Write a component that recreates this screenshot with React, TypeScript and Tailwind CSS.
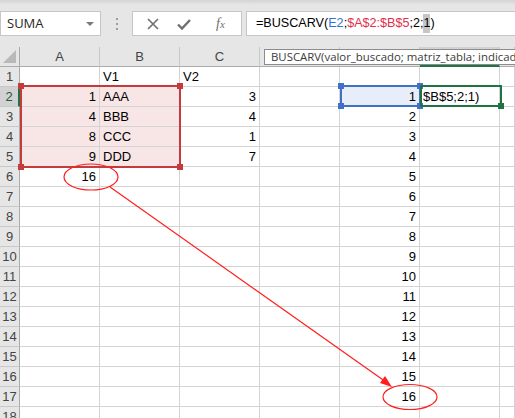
import React from "react"

const COLS = ["A", "B", "C", "D", "E", "F", "G"]
const WIDTHS = ["w-[80px]", "w-[80px]", "w-[80px]", "w-[80px]", "w-[80px]", "w-[80px]", "w-[15px]"]
// D to G header labels sit under the function tooltip
const HIDDEN_HEADERS = ["D", "E", "F", "G"]

type Cell = { v: string; right?: boolean }

const DATA: Record<string, Cell> = {
  B1: { v: "V1" },
  C1: { v: "V2" },
  A2: { v: "1", right: true },
  A3: { v: "4", right: true },
  A4: { v: "8", right: true },
  A5: { v: "9", right: true },
  B2: { v: "AAA" },
  B3: { v: "BBB" },
  B4: { v: "CCC" },
  B5: { v: "DDD" },
  C2: { v: "3", right: true },
  C3: { v: "4", right: true },
  C4: { v: "1", right: true },
  C5: { v: "7", right: true },
  A6: { v: "16", right: true },
  F2: { v: "$B$5;2;1)" },
}
for (let i = 2; i <= 17; i++) DATA["E" + i] = { v: String(i - 1), right: true }

const ROWS = Array.from({ length: 18 }, (_, i) => i + 1)

function inRange(col: string, row: number) {
  return (col === "A" || col === "B") && row >= 2 && row <= 5
}

function Handle({ className }: { className: string }) {
  return <div className={`absolute h-[6px] w-[6px] ${className}`} />
}

export default function App() {
  return (
    <div className="relative h-[418px] w-[515px] overflow-hidden bg-white font-['Liberation_Sans',Arial,sans-serif] text-[13px] text-black">
      {/* formula bar */}
      <div className="flex h-[47px] flex-col bg-[#e6e6e6]">
        <div className="h-[5px] bg-gradient-to-b from-[#d4d4d4] to-[#e6e6e6]" />
        <div className="mt-[6px] flex h-[25px] items-stretch">
          <div className="flex w-[101px] items-center justify-between border border-[#c6c6c6] bg-white px-[6px] font-['Open_Sans',sans-serif] text-[13px] text-[#262626]">
            <span>SUMA</span>
            <span className="h-0 w-0 border-l-[4px] border-r-[4px] border-t-[4px] border-l-transparent border-r-transparent border-t-[#7a7a7a]" />
          </div>
          <div className="flex w-[31px] flex-col items-center justify-center gap-[3px]">
            <span className="h-[2px] w-[2px] bg-[#9c9c9c]" />
            <span className="h-[2px] w-[2px] bg-[#9c9c9c]" />
            <span className="h-[2px] w-[2px] bg-[#9c9c9c]" />
          </div>
          <div className="flex w-[110px] items-center border border-[#c6c6c6] bg-white">
            <svg width="12" height="12" viewBox="0 0 12 12" className="ml-[14px]">
              <path d="M1 1 L11 11 M11 1 L1 11" stroke="#6f6f6f" strokeWidth="1.6" />
            </svg>
            <svg width="14" height="12" viewBox="0 0 14 12" className="ml-[18px]">
              <path d="M1 6.5 L5 10.5 L13 2" stroke="#6f6f6f" strokeWidth="2.4" fill="none" />
            </svg>
            <span className="ml-[25px] font-['Liberation_Serif',serif] text-[14px] italic text-[#6f6f6f]">
              f<span className="text-[11px]">x</span>
            </span>
          </div>
          <div className="ml-[4px] flex flex-1 items-center whitespace-nowrap border border-r-0 border-[#c6c6c6] bg-white pl-[9px] text-[12.6px]">
            <span>=BUSCARV(</span>
            <span className="text-[#2f75d0]">E2</span>
            <span>;</span>
            <span className="text-[#e0304a]">$A$2:$B$5</span>
            <span>;2;</span>
            <span className="bg-[#c6c6c6]">1</span>
            <span>)</span>
          </div>
        </div>
      </div>

      {/* column headers */}
      <div className="flex h-[20px] bg-[#e6e6e6]">
        <div className="relative w-[20px] border-b border-r border-[#ababab]">
          <div className="absolute bottom-[3px] right-[3px] h-0 w-0 border-b-[13px] border-l-[13px] border-b-[#b9b9b9] border-l-transparent" />
        </div>
        {COLS.map((c, i) => (
          <div
            key={c}
            className={`${WIDTHS[i]} flex items-center justify-center border-r border-[#c8c8c8] text-[#444] ${
              c === "F" ? "border-b-2 border-b-[#217346] bg-[#d2d2d2]" : "border-b border-b-[#ababab]"
            }`}
          >
            {HIDDEN_HEADERS.includes(c) ? null : c}
          </div>
        ))}
      </div>

      {/* rows */}
      {ROWS.map((r) => (
        <div key={r} className="flex h-[20px]">
          <div
            className={`flex w-[20px] items-center justify-center border-b border-[#c8c8c8] ${
              r === 2
                ? "border-r-2 border-r-[#217346] bg-[#d2d2d2] text-[#1f5c3a]"
                : "border-r border-r-[#ababab] bg-[#e6e6e6] text-[#444]"
            }`}
          >
            {r}
          </div>
          {COLS.map((c, i) => {
            const cell = DATA[c + r]
            const bg = inRange(c, r) ? "bg-[#f8e6e6]" : c === "E" && r === 2 ? "bg-[#e8eef9]" : ""
            return (
              <div
                key={c}
                className={`${WIDTHS[i]} ${bg} flex items-center overflow-visible whitespace-nowrap border-b border-r border-[#d4d4d4] px-[3px] leading-[19px] ${
                  cell?.right ? "justify-end" : "justify-start"
                }`}
              >
                {cell?.v}
              </div>
            )
          })}
        </div>
      ))}

      {/* range reference A2:B5 */}
      <div className="pointer-events-none absolute left-[20px] top-[85px] h-[83px] w-[161px] border-2 border-[#c43b3d]">
        <Handle className="-left-[4px] -top-[4px] bg-[#c43b3d]" />
        <Handle className="-right-[4px] -top-[4px] bg-[#c43b3d]" />
        <Handle className="-bottom-[4px] -left-[4px] bg-[#c43b3d]" />
        <Handle className="-bottom-[4px] -right-[4px] bg-[#c43b3d]" />
      </div>

      {/* reference E2 */}
      <div className="pointer-events-none absolute left-[340px] top-[85px] h-[22px] w-[81px] border-2 border-[#3f71c8]">
        <Handle className="-left-[4px] -top-[4px] bg-[#3f71c8]" />
        <Handle className="-right-[4px] -top-[4px] bg-[#3f71c8]" />
        <Handle className="-bottom-[4px] -left-[4px] bg-[#3f71c8]" />
        <Handle className="-bottom-[4px] -right-[4px] bg-[#3f71c8]" />
      </div>

      {/* active cell F2 */}
      <div className="pointer-events-none absolute left-[420px] top-[85px] h-[22px] w-[82px] border-2 border-[#217346]">
        <Handle className="-bottom-[4px] -right-[4px] h-[5px] w-[5px] bg-[#217346]" />
      </div>

      {/* function tooltip */}
      <div className="absolute left-[264px] top-[49px] h-[16px] w-[300px] overflow-hidden whitespace-nowrap border border-[#8c8c8c] bg-white pl-[6px] font-['Open_Sans',sans-serif] text-[11.4px] leading-[14px] text-[#3b3b3b]">
        BUSCARV(valor_buscado; matriz_tabla; indicador_columnas; [rango])
      </div>

      {/* annotations */}
      <svg className="pointer-events-none absolute left-0 top-0" width="515" height="418">
        <ellipse cx="91" cy="177" rx="27" ry="13" fill="none" stroke="#ff1f1f" strokeWidth="1.2" />
        <ellipse cx="410" cy="397" rx="27" ry="12.5" fill="none" stroke="#ff1f1f" strokeWidth="1.2" />
        <line x1="110" y1="187" x2="386" y2="382" stroke="#ff1f1f" strokeWidth="1.2" />
        <path d="M392 387 L380 383 L385 376 Z" fill="#ff1f1f" />
      </svg>
    </div>
  )
}
